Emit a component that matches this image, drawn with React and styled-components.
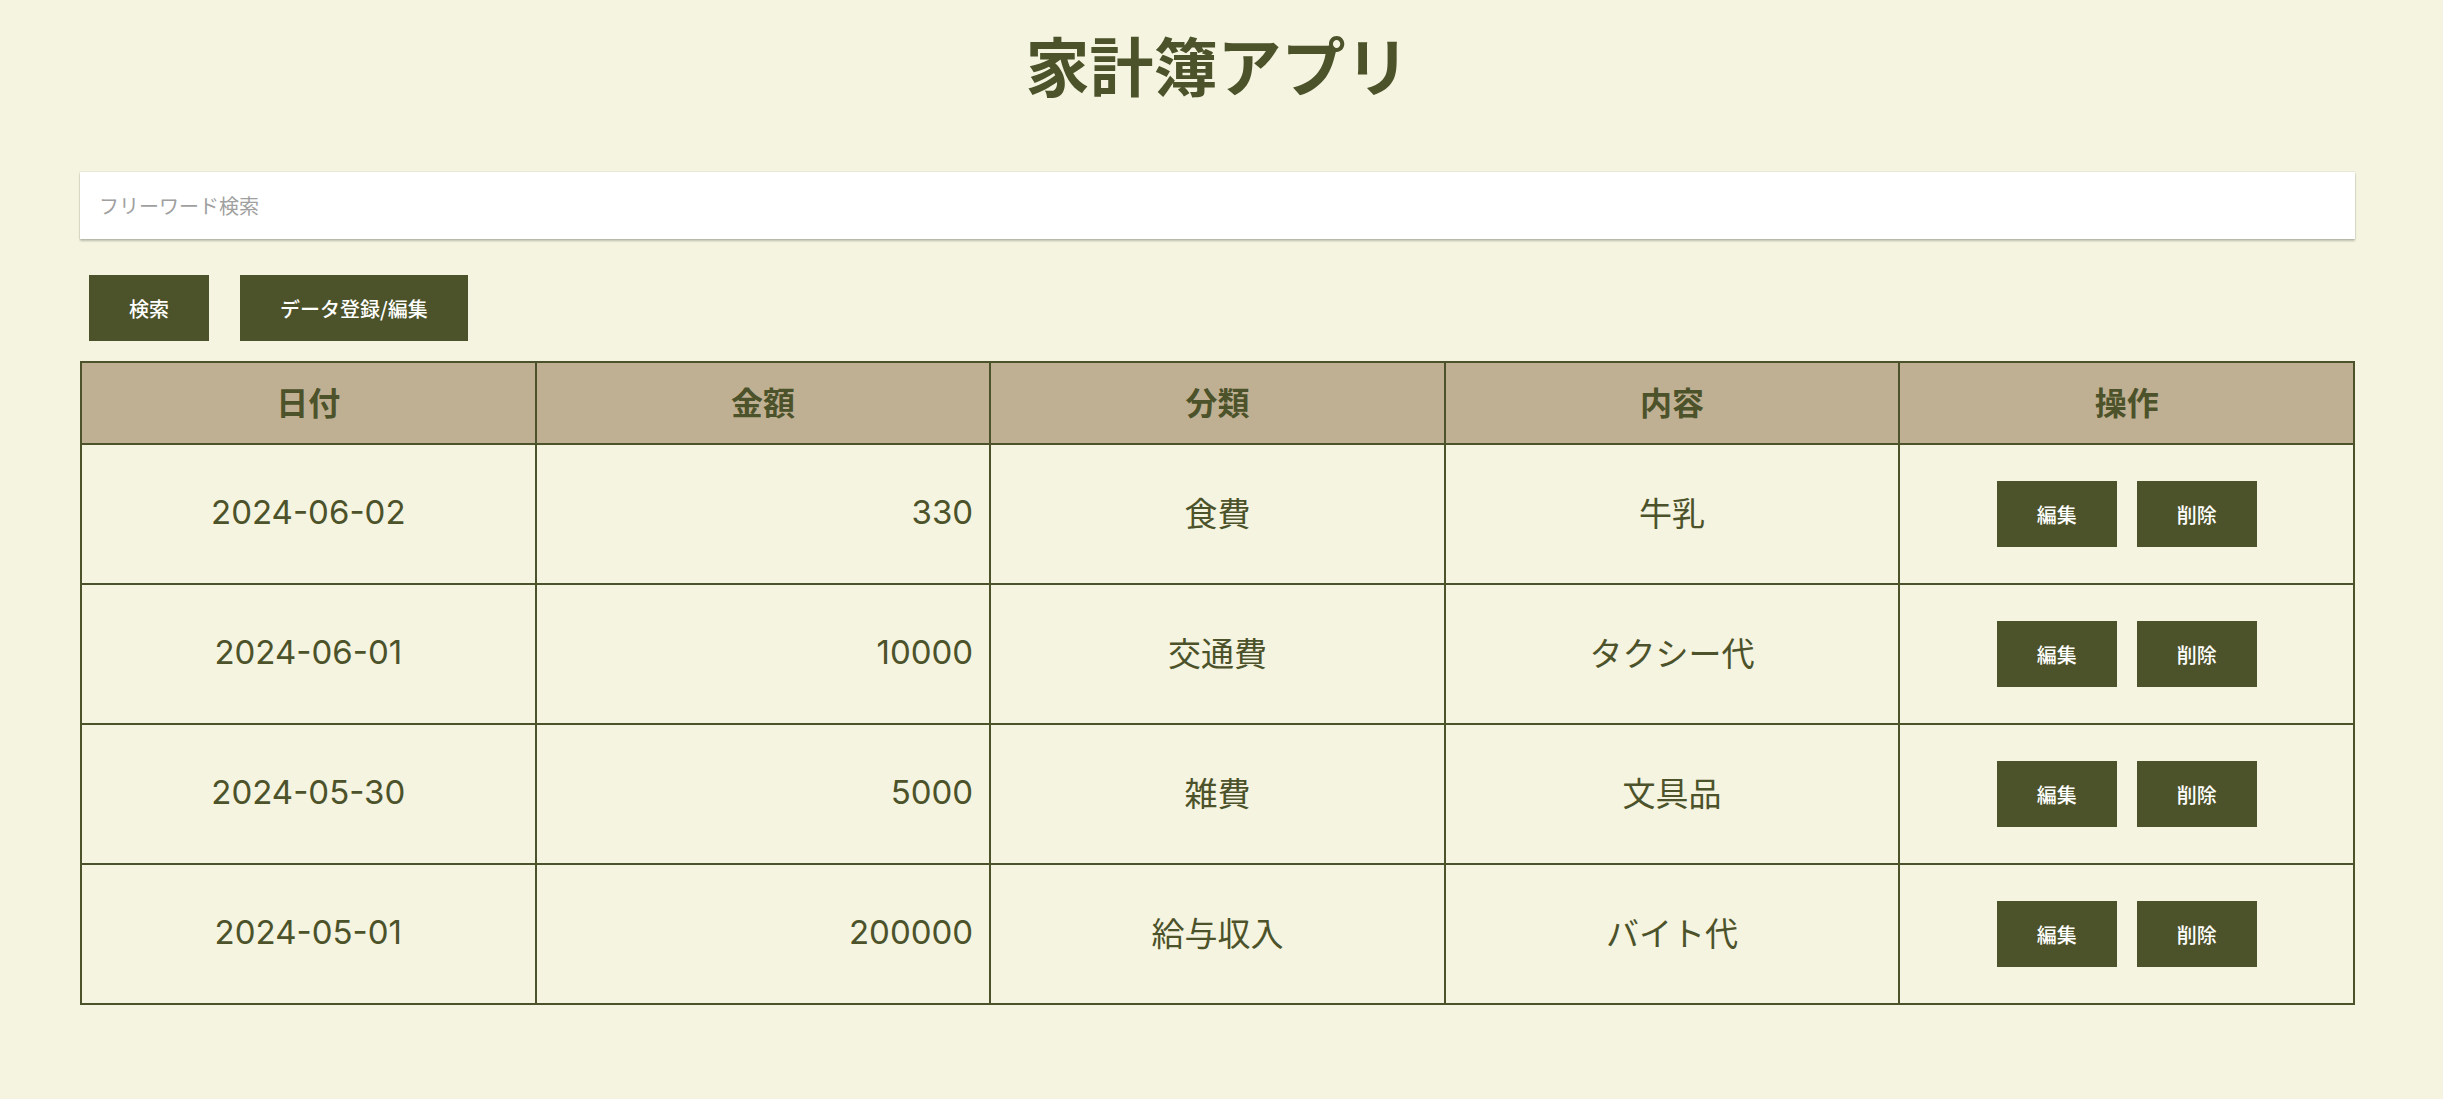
import React from "react";
import styled, { createGlobalStyle } from "styled-components";

const olive = "#4c5229";

const GlobalStyle = createGlobalStyle`
  html, body {
    margin: 0;
    padding: 0;
    background: #f4f4e0;
  }
  body {
    font-family: "Noto Sans CJK JP", "Noto Sans", sans-serif;
    color: ${olive};
  }
`;

const Page = styled.div`
  width: 2275px;
  margin-left: 80px;
  padding-top: 31px;
  padding-bottom: 88px;
`;

const Title = styled.h1`
  margin: 0;
  font-size: 64px;
  line-height: 64px;
  font-weight: 700;
  text-align: center;
  color: ${olive};
`;

const SearchInput = styled.input`
  display: block;
  box-sizing: border-box;
  width: 100%;
  height: 67px;
  margin-top: 77px;
  padding: 0 19px;
  border: none;
  outline: none;
  background: #ffffff;
  font-family: inherit;
  font-size: 20px;
  color: #333;
  box-shadow: 0 0 1px rgba(0, 0, 0, 0.25), 0 2px 2px rgba(0, 0, 0, 0.22);
  &::placeholder {
    color: #a0a0a0;
  }
`;

const Toolbar = styled.div`
  display: flex;
  gap: 31px;
  margin-top: 36px;
  padding-left: 9px;
`;

const Button = styled.button`
  height: 66px;
  padding: 0 40px;
  border: none;
  background: ${olive};
  color: #ffffff;
  font-family: inherit;
  font-size: 20px;
  font-weight: 500;
  cursor: pointer;
`;

const Table = styled.table`
  width: 100%;
  margin-top: 20px;
  border-collapse: collapse;
  table-layout: fixed;
  border: 2px solid ${olive};
`;

const Th = styled.th`
  height: 76px;
  padding: 0 0 4px;
  background: #c0b093;
  border: 2px solid ${olive};
  font-size: 32px;
  font-weight: 700;
  color: ${olive};
  text-align: center;
`;

const Td = styled.td`
  height: 134px;
  padding: 0 16px 4px;
  border: 2px solid ${olive};
  font-family: Inter, "Noto Sans CJK JP", sans-serif;
  font-size: 33px;
  text-align: ${(p) => p.$align || "center"};
  color: ${olive};
`;

const Actions = styled.div`
  display: flex;
  justify-content: center;
  gap: 20px;
  margin-bottom: -4px;
`;

const ActionButton = styled(Button)`
  font-family: "Noto Sans CJK JP", sans-serif;
`;

const rows = [
  { date: "2024-06-02", amount: 330, category: "食費", content: "牛乳" },
  { date: "2024-06-01", amount: 10000, category: "交通費", content: "タクシー代" },
  { date: "2024-05-30", amount: 5000, category: "雑費", content: "文具品" },
  { date: "2024-05-01", amount: 200000, category: "給与収入", content: "バイト代" },
];

export default function App() {
  return (
    <>
      <GlobalStyle />
      <Page>
        <Title>家計簿アプリ</Title>
        <SearchInput placeholder="フリーワード検索" />
        <Toolbar>
          <Button>検索</Button>
          <Button>データ登録/編集</Button>
        </Toolbar>
        <Table>
          <thead>
            <tr>
              <Th>日付</Th>
              <Th>金額</Th>
              <Th>分類</Th>
              <Th>内容</Th>
              <Th>操作</Th>
            </tr>
          </thead>
          <tbody>
            {rows.map((r) => (
              <tr key={r.date}>
                <Td>{r.date}</Td>
                <Td $align="right">{r.amount}</Td>
                <Td>{r.category}</Td>
                <Td>{r.content}</Td>
                <Td>
                  <Actions>
                    <ActionButton>編集</ActionButton>
                    <ActionButton>削除</ActionButton>
                  </Actions>
                </Td>
              </tr>
            ))}
          </tbody>
        </Table>
      </Page>
    </>
  );
}
